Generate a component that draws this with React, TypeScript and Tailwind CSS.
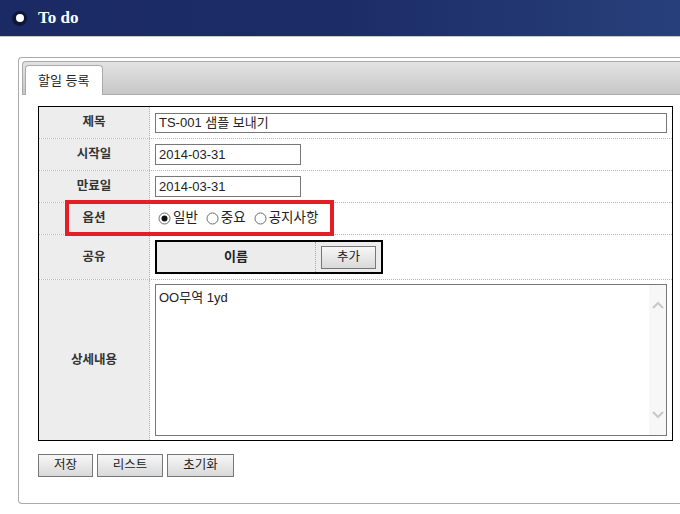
import React from "react";

const ko = { fontFamily: '"Liberation Sans", "Noto Sans CJK KR", sans-serif' };

function Radio({ checked, label }: { checked?: boolean; label: string }) {
  return (
    <label className="flex items-center gap-[2px] mr-[8px]">
      <svg width="13" height="13" viewBox="0 0 13 13">
        <circle cx="6.5" cy="6.5" r="5.5" fill="#fff" stroke="#6b6b6b" strokeWidth="1" />
        {checked && <circle cx="6.5" cy="6.5" r="3" fill="#111" />}
      </svg>
      <span className="text-[13.5px] text-[#222]">{label}</span>
    </label>
  );
}

function Row({ label, h, children, last }: { label: string; h: string; children: React.ReactNode; last?: boolean }) {
  return (
    <div className={`grid grid-cols-[111px_1fr] ${h} ${last ? "" : "border-b border-dotted border-[#b5b5b5]"}`}>
      <div className="flex items-center justify-center bg-[#ededed] border-r border-dotted border-[#b5b5b5] text-[12.5px] font-bold text-[#333]">
        {label}
      </div>
      <div className="flex items-center pl-[5px] pr-[5px]">{children}</div>
    </div>
  );
}

function Btn({ children, w }: { children: React.ReactNode; w: string }) {
  return (
    <button
      className={`${w} h-[23px] border border-[#777] bg-linear-to-b from-[#f7f7f7] to-[#d9d9d9] text-[12.5px] text-[#222]`}
    >
      {children}
    </button>
  );
}

export default function App() {
  return (
    <div className="w-[680px] h-[514px] bg-white overflow-hidden" style={ko}>
      {/* header */}
      <div className="h-[37px] flex items-center pl-[12px] bg-linear-to-r from-[#1b2a65] via-[#1c2c67] to-[#27407b] border-b border-[#c8c8c8]">
        <div className="w-[15px] h-[15px] rounded-full bg-[#0e1738] flex items-center justify-center">
          <div className="w-[8px] h-[8px] rounded-full bg-white" />
        </div>
        <span
          className="ml-[11px] text-[17px] font-bold text-white"
          style={{ fontFamily: '"Liberation Serif", serif' }}
        >
          To do
        </span>
      </div>

      <div className="pt-[20px] pl-[18px]">
        <div className="w-[680px] h-[447px] border border-r-0 border-[#aaa] rounded-l-[4px] p-[3px]">
          {/* tab bar */}
          <div className="h-[34px] flex items-end pl-[2px] border border-r-0 border-[#aaa] rounded-tl-[4px] bg-linear-to-b from-[#e3e3e3] to-[#c7c7c7]">
            <div className="w-[78px] h-[30px] -mb-px bg-white border border-b-0 border-[#aaa] rounded-t-[4px] flex items-center pl-[12px] text-[13px] text-[#222]">
              할일 등록
            </div>
          </div>

          <div className="pl-[16px] pt-[11px]">
            <div className="relative w-[635px] border border-black">
              <Row label="제목" h="h-[32px]">
                <div className="w-[512px] h-[20px] border border-[#777] flex items-center pl-[3px] text-[13px] text-[#222]">
                  TS-001 샘플 보내기
                </div>
              </Row>
              <Row label="시작일" h="h-[32px]">
                <div className="w-[146px] h-[21px] border border-[#777] flex items-center pl-[3px] text-[13px] text-[#222]">
                  2014-03-31
                </div>
              </Row>
              <Row label="만료일" h="h-[32px]">
                <div className="w-[146px] h-[21px] border border-[#777] flex items-center pl-[3px] text-[13px] text-[#222]">
                  2014-03-31
                </div>
              </Row>
              <Row label="옵션" h="h-[32px]">
                <div className="flex items-center pl-[3px]">
                  <Radio checked label="일반" />
                  <Radio label="중요" />
                  <Radio label="공지사항" />
                </div>
              </Row>
              <Row label="공유" h="h-[45px]">
                <div className="w-[228px] h-[34px] border-2 border-black flex bg-[#ececec]">
                  <div className="w-[159px] flex items-center justify-center border-r border-dotted border-[#aaa] text-[13px] font-bold text-[#222]">
                    이름
                  </div>
                  <div className="flex-1 flex items-center justify-center">
                    <Btn w="w-[55px]">추가</Btn>
                  </div>
                </div>
              </Row>
              <Row label="상세내용" h="h-[160px]" last>
                <div className="w-[512px] h-[152px] border border-[#777] flex">
                  <div className="flex-1 pl-[3px] pt-[3px] text-[13px] text-[#222]">OO무역 1yd</div>
                  <div className="w-[17px] bg-[#f7f7f7] flex flex-col items-center justify-between py-[16px]">
                    <svg width="12" height="8" viewBox="0 0 12 8">
                      <path d="M1 7 L6 2 L11 7" fill="none" stroke="#c8c8c8" strokeWidth="2" />
                    </svg>
                    <svg width="12" height="8" viewBox="0 0 12 8">
                      <path d="M1 1 L6 6 L11 1" fill="none" stroke="#c8c8c8" strokeWidth="2" />
                    </svg>
                  </div>
                </div>
              </Row>

              <div className="absolute left-[26px] top-[93px] w-[269px] h-[36px] border-4 border-[#e51d25]" />
            </div>

            <div className="flex gap-[4px] mt-[13px]">
              <Btn w="w-[55px]">저장</Btn>
              <Btn w="w-[66px]">리스트</Btn>
              <Btn w="w-[67px]">초기화</Btn>
            </div>
          </div>
        </div>
      </div>
    </div>
  );
}
